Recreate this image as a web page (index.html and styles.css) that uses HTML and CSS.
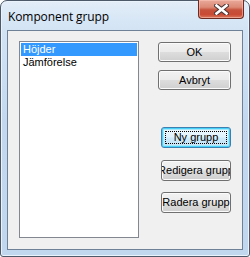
FILE: index.html
```html
<!DOCTYPE html>
<html>
<head>
<meta charset="utf-8">
<link rel="stylesheet" href="styles.css">
</head>
<body>
<div class="window">
  <div class="titlebar">
    <span class="title">Komponent grupp</span>
    <div class="close">
      <svg width="15" height="11" viewBox="0 0 15 11">
        <path d="M2.5 1.5 L12.5 9.5 M12.5 1.5 L2.5 9.5" stroke="#4a3434" stroke-width="4.6" stroke-linecap="square"/>
        <path d="M2.5 1.5 L12.5 9.5 M12.5 1.5 L2.5 9.5" stroke="#ffffff" stroke-width="2.6" stroke-linecap="square"/>
      </svg>
    </div>
  </div>
  <div class="client">
    <div class="listbox">
      <div class="item selected">Höjder</div>
      <div class="item">Jämförelse</div>
    </div>
    <div class="buttons">
      <div class="btn btn-ok">OK</div>
      <div class="btn btn-cancel">Avbryt</div>
      <div class="btn btn-focus btn-new"><span class="focusrect">Ny grupp</span></div>
      <div class="btn btn-small btn-edit"><span>Redigera grupp</span></div>
      <div class="btn btn-small btn-del"><span>Radera grupp</span></div>
    </div>
  </div>
</div>
</body>
</html>
```

FILE: styles.css
```css
* { box-sizing: border-box; }
html, body { margin: 0; padding: 0; background: #ffffff; }
body { width: 250px; height: 257px; overflow: hidden; }

.window {
  width: 250px;
  height: 257px;
  border: 1px solid #4d5968;
  border-radius: 7px 7px 3px 3px;
  background: linear-gradient(to bottom, #e2edf8 0px, #d2e3f4 30px, #c3d8ef 120px, #c1d7ee 257px);
  padding: 0 6px 6px 6px;
  display: flex;
  flex-direction: column;
  box-shadow: inset 0 0 0 1px #eaf2fb;
}

.titlebar {
  height: 29px;
  display: flex;
  justify-content: space-between;
  align-items: flex-start;
  padding-left: 1px;
}

.title {
  font-family: "Open Sans", "Noto Sans", sans-serif;
  font-size: 12px;
  color: #000000;
  margin-top: 7px;
  letter-spacing: -0.1px;
}

.close {
  width: 46px;
  height: 19px;
  margin-top: -1px;
  margin-right: -1px;
  border: 1px solid #6b2b22;
  border-top: none;
  border-radius: 0 0 4px 4px;
  background: linear-gradient(to bottom, #e9a99a 0%, #dc8a76 40%, #c6523c 55%, #c94a33 80%, #d8775c 100%);
  box-shadow: inset 0 0 0 1px rgba(255, 200, 190, 0.55);
  display: flex;
  align-items: center;
  justify-content: center;
}

.client {
  height: 220px;
  border: 1px solid #6f8196;
  background: #f0f0f0;
  display: flex;
  align-items: flex-start;
  padding: 10px 0 0 11px;
  font-family: "Liberation Sans", Arial, sans-serif;
  font-size: 11px;
  color: #000000;
}

.listbox {
  width: 120px;
  height: 197px;
  border: 1px solid #828790;
  background: #ffffff;
  padding-top: 1px;
}

.item {
  height: 13px;
  line-height: 13px;
  margin: 0 1px;
  padding-left: 2px;
  white-space: nowrap;
}

.item.selected {
  background: #3399ff;
  color: #ffffff;
}

.buttons {
  margin-left: 19px;
  display: flex;
  flex-direction: column;
  align-items: flex-start;
}

.btn {
  display: flex;
  align-items: center;
  justify-content: center;
  border: 1px solid #707070;
  border-radius: 3px;
  background: linear-gradient(to bottom, #f2f2f2 0%, #ebebeb 48%, #dddddd 52%, #cfcfcf 100%);
  box-shadow: inset 0 0 0 1px #fbfbfb;
  white-space: nowrap;
  overflow: hidden;
  font-size: 11px;
  line-height: 13px;
}

.btn-ok { width: 73px; height: 20px; margin-top: 1px; }
.btn-cancel { width: 73px; height: 20px; margin-top: 8px; }

.btn-focus {
  width: 70px;
  height: 21px;
  margin-top: 37px;
  margin-left: 3px;
  padding: 3px;
  border-color: #3c7fb1;
  box-shadow: inset 0 0 0 1px #48d1f9, inset 0 0 0 2px #a6e7fb;
  background: linear-gradient(to bottom, #eef9fe 0%, #e2f3fc 48%, #cfeaf9 52%, #c3e3f6 100%);
}

.focusrect {
  width: 100%;
  height: 100%;
  border: 1px dotted #000000;
  display: flex;
  align-items: center;
  justify-content: center;
}

.btn-small {
  width: 70px;
  height: 21px;
  margin-left: 3px;
  justify-content: center;
}

.btn-small span { flex-shrink: 0; }

.btn-edit { margin-top: 12px; }
.btn-del { margin-top: 11px; }
```
